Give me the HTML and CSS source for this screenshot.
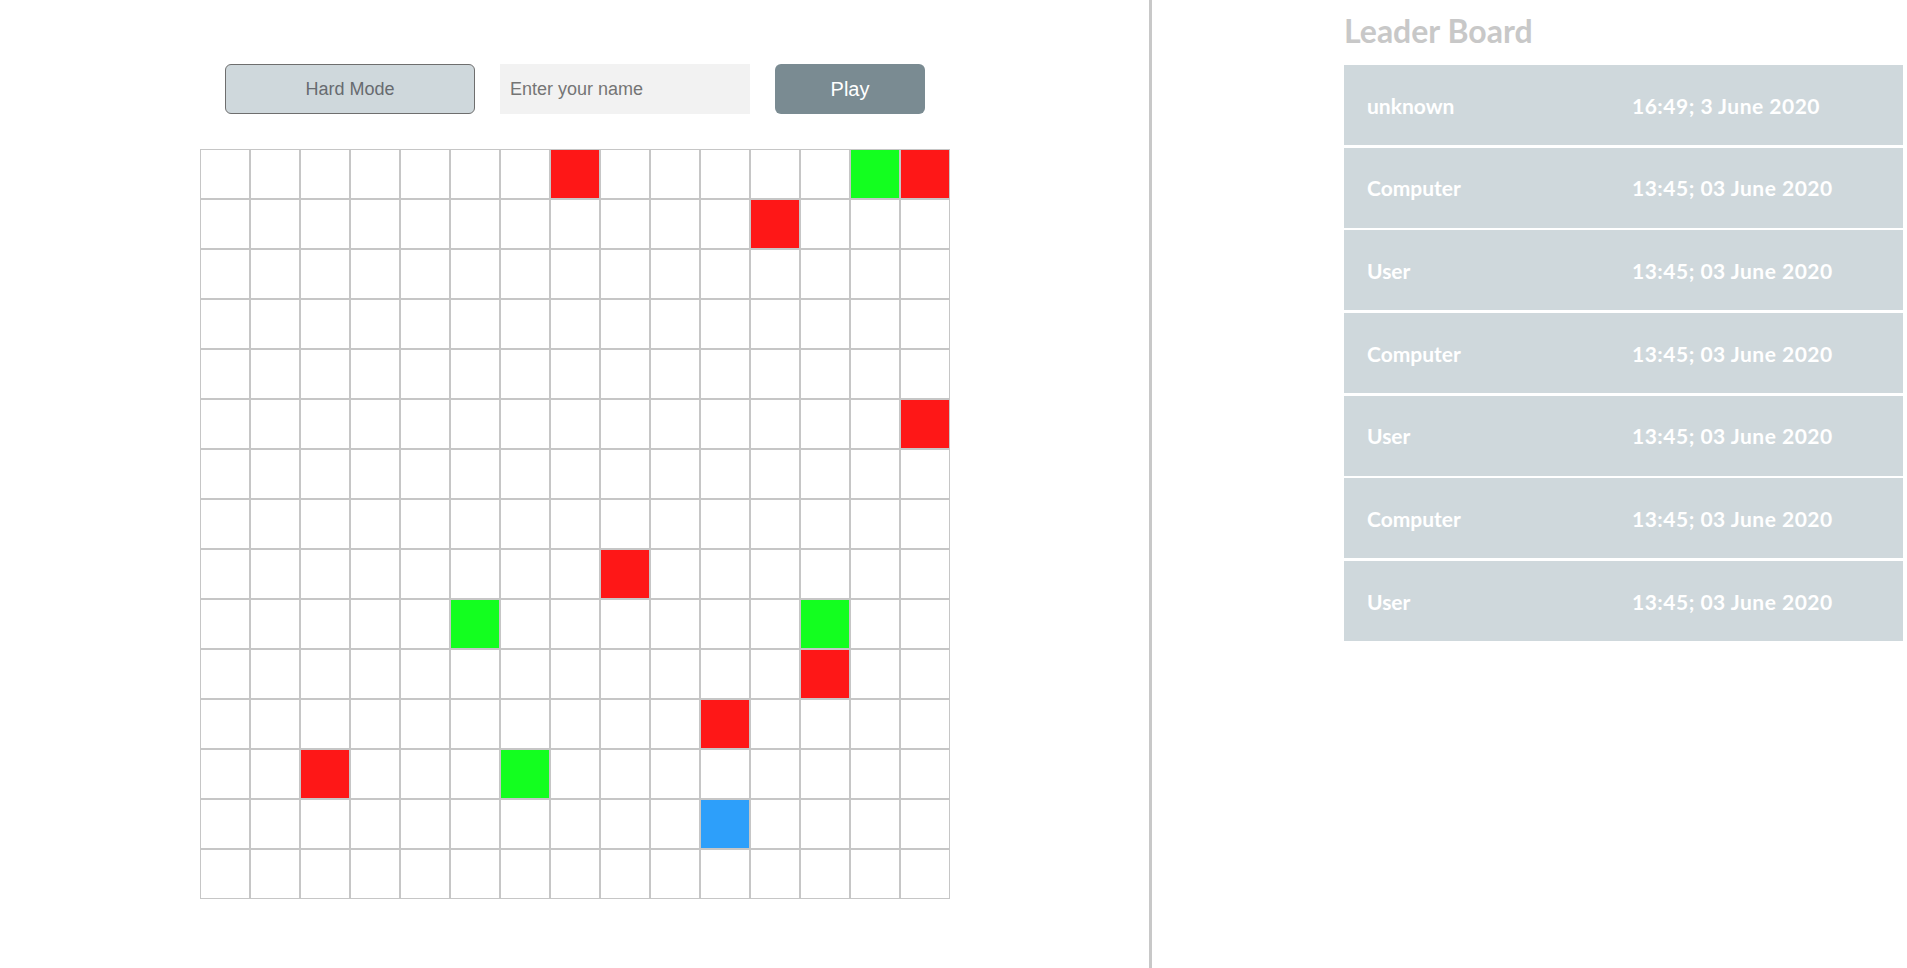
FILE: index.html
```html
<!DOCTYPE html>
<html lang="en">
<head>
<meta charset="utf-8">
<title>Game</title>
<link rel="stylesheet" href="styles.css">
</head>
<body>
<div class="page">
  <main class="game">
    <div class="controls">
      <button class="mode-btn">Hard Mode</button>
      <input class="name-input" type="text" placeholder="Enter your name">
      <button class="play-btn">Play</button>
    </div>
    <div class="board" id="board"></div>
  </main>
  <aside class="leaders">
    <h2 class="leaders-title">Leader Board</h2>
    <ul class="leaders-list">
      <li class="leader-row"><span>unknown</span><span class="leader-date">16:49; 3 June 2020</span></li>
      <li class="leader-row"><span>Computer</span><span class="leader-date">13:45; 03 June 2020</span></li>
      <li class="leader-row"><span>User</span><span class="leader-date">13:45; 03 June 2020</span></li>
      <li class="leader-row"><span>Computer</span><span class="leader-date">13:45; 03 June 2020</span></li>
      <li class="leader-row"><span>User</span><span class="leader-date">13:45; 03 June 2020</span></li>
      <li class="leader-row"><span>Computer</span><span class="leader-date">13:45; 03 June 2020</span></li>
      <li class="leader-row"><span>User</span><span class="leader-date">13:45; 03 June 2020</span></li>
    </ul>
  </aside>
</div>
<script>
  (function () {
    var marks = {
      "0-7": "red", "0-13": "green", "0-14": "red",
      "1-11": "red",
      "5-14": "red",
      "8-8": "red",
      "9-5": "green", "9-12": "green",
      "10-12": "red",
      "11-10": "red",
      "12-2": "red", "12-6": "green",
      "13-10": "blue"
    };
    var board = document.getElementById("board");
    for (var r = 0; r < 15; r++) {
      for (var c = 0; c < 15; c++) {
        var cell = document.createElement("div");
        cell.className = "cell";
        var m = marks[r + "-" + c];
        if (m) cell.className += " cell-" + m;
        board.appendChild(cell);
      }
    }
  })();
</script>
</body>
</html>
```
FILE: styles.css
```css
* { box-sizing: border-box; }
html, body { margin: 0; padding: 0; background: #fff; }
body { font-family: "Liberation Sans", Arial, sans-serif; }

.page {
  display: flex;
  height: 968px;
  overflow: hidden;
}

.game {
  width: 1152px;
  flex: none;
  border-right: 3px solid #c8c8c8;
  display: flex;
  flex-direction: column;
  align-items: center;
  padding: 64px 0 0 1px;
}

.controls {
  display: flex;
  gap: 25px;
  height: 50px;
}

.mode-btn {
  width: 250px;
  height: 50px;
  background: #cfd8dc;
  border: 1px solid #6e6e6e;
  border-radius: 6px;
  font-family: "Liberation Sans", Arial, sans-serif;
  font-size: 18px;
  color: #676b70;
  padding: 0;
}

.name-input {
  width: 250px;
  height: 50px;
  background: #f2f2f2;
  border: none;
  padding: 0 10px;
  font-family: "Liberation Sans", Arial, sans-serif;
  font-size: 18px;
  outline: none;
}
.name-input::placeholder { color: #757575; }

.play-btn {
  width: 150px;
  height: 50px;
  background: #7a8b92;
  border: none;
  border-radius: 6px;
  color: #fff;
  font-family: "Liberation Sans", Arial, sans-serif;
  font-size: 20px;
  padding: 0;
}

.board {
  margin-top: 35px;
  display: grid;
  grid-template-columns: repeat(15, 50px);
  grid-auto-rows: 50px;
}

.cell {
  border: 1px solid #c6c6c6;
  background: #fff;
}
.cell-red { background: #fe1717; }
.cell-green { background: #13ff1f; }
.cell-blue { background: #2d9ffa; }

.leaders {
  flex: 1;
  padding: 12px 4px 0 192px;
  font-family: Lato, "Noto Sans", sans-serif;
}

.leaders-title {
  margin: 0 0 15px;
  font-size: 32px;
  line-height: 38px;
  font-weight: 700;
  color: #c8c8c8;
}

.leaders-list {
  list-style: none;
  margin: 0;
  padding: 0;
  display: flex;
  flex-direction: column;
  gap: 2.7px;
}

.leader-row {
  height: 80px;
  background: #cfd8dc;
  color: #fff;
  display: grid;
  grid-template-columns: 265px 1fr;
  align-items: center;
  padding-left: 23px;
  font-size: 21px;
  font-weight: 700;
}

.leader-date {
  letter-spacing: 0.5px;
}
```
